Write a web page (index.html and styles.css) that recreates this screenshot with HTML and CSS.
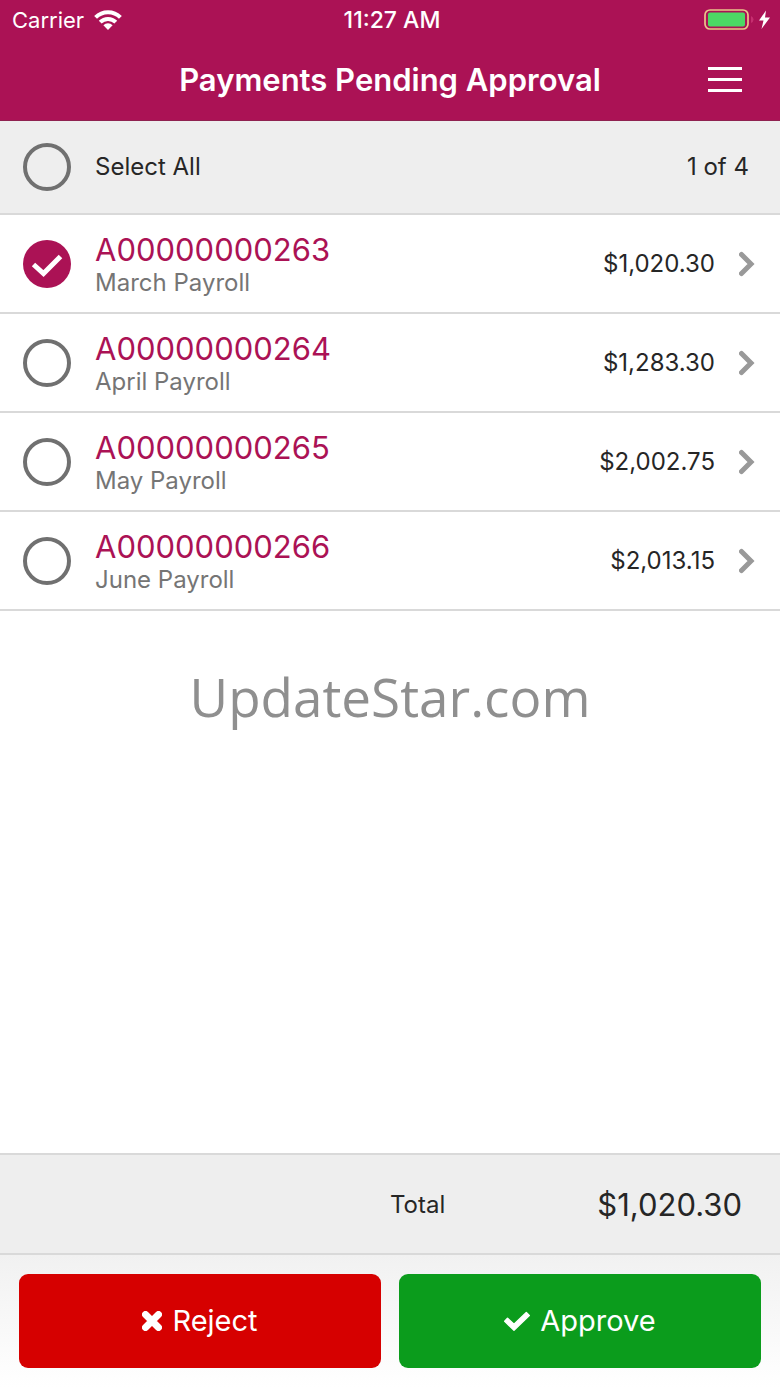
FILE: index.html
```html
<!DOCTYPE html>
<html lang="en">
<head>
<meta charset="utf-8">
<meta name="viewport" content="width=device-width, initial-scale=1">
<title>Payments Pending Approval</title>
<link rel="stylesheet" href="styles.css">
</head>
<body>
<header class="header">
  <div class="status">
    <div class="status-left">
      <span class="carrier">Carrier</span>
      <svg class="wifi" viewBox="0 0 28 20" aria-hidden="true">
        <g fill="none" stroke="currentColor" stroke-width="4">
          <path d="M1.6 7.4 A17.5 17.5 0 0 1 26.4 7.4"/>
          <path d="M6.2 12.2 A11 11 0 0 1 21.8 12.2"/>
        </g>
        <path fill="currentColor" d="M14 20 L9.4 15.2 A6.6 6.6 0 0 1 18.6 15.2 Z"/>
      </svg>
    </div>
    <time class="clock">11:27 AM</time>
    <div class="status-right">
      <svg class="battery" viewBox="0 0 68 22" aria-hidden="true">
        <rect x="1" y="1" width="43" height="19" rx="5" fill="none" stroke="#eac58b" stroke-width="1.700"/>
        <rect x="4" y="3.500" width="37" height="14" rx="2" fill="#4cd964"/>
        <path d="M47 7 Q49.500 8 49.500 10.500 Q49.500 13 47 14 Z" fill="#c62f70"/>
        <path d="M62 1.500 L55 11.500 H59.500 L57.500 20 L66 8.500 H61 Z" fill="#fff"/>
      </svg>
    </div>
  </div>
  <div class="nav">
    <h1 class="title">Payments Pending Approval</h1>
    <button class="menu" type="button" aria-label="Menu">
      <svg class="menu-icon" viewBox="0 0 34 26" aria-hidden="true"><path d="M0 1.500H34M0 12.500H34M0 23.500H34" stroke="currentColor" stroke-width="3"/></svg>
    </button>
  </div>
</header>

<div class="select-bar">
  <input class="check" type="checkbox" id="all">
  <label class="select-label" for="all">Select All</label>
  <span class="count">1 of 4</span>
</div>

<main class="main">
  <ul class="list">
    <li class="row">
      <input class="check" type="checkbox" id="p263" checked>
      <label class="info" for="p263"><span class="ref">A00000000263</span><span class="desc">March Payroll</span></label>
      <span class="amount">$1,020.30</span>
      <a class="details" href="#p263" aria-label="Details of A00000000263"><svg class="chevron" viewBox="0 0 16 26" aria-hidden="true"><path d="M2.500 3.500L12 13L2.500 22.500"/></svg></a>
    </li>
    <li class="row">
      <input class="check" type="checkbox" id="p264">
      <label class="info" for="p264"><span class="ref">A00000000264</span><span class="desc">April Payroll</span></label>
      <span class="amount">$1,283.30</span>
      <a class="details" href="#p264" aria-label="Details of A00000000264"><svg class="chevron" viewBox="0 0 16 26" aria-hidden="true"><path d="M2.500 3.500L12 13L2.500 22.500"/></svg></a>
    </li>
    <li class="row">
      <input class="check" type="checkbox" id="p265">
      <label class="info" for="p265"><span class="ref">A00000000265</span><span class="desc">May Payroll</span></label>
      <span class="amount">$2,002.75</span>
      <a class="details" href="#p265" aria-label="Details of A00000000265"><svg class="chevron" viewBox="0 0 16 26" aria-hidden="true"><path d="M2.500 3.500L12 13L2.500 22.500"/></svg></a>
    </li>
    <li class="row">
      <input class="check" type="checkbox" id="p266">
      <label class="info" for="p266"><span class="ref">A00000000266</span><span class="desc">June Payroll</span></label>
      <span class="amount">$2,013.15</span>
      <a class="details" href="#p266" aria-label="Details of A00000000266"><svg class="chevron" viewBox="0 0 16 26" aria-hidden="true"><path d="M2.500 3.500L12 13L2.500 22.500"/></svg></a>
    </li>
  </ul>
  <p class="watermark">UpdateStar.com</p>
</main>

<section class="total">
  <span class="total-label">Total</span>
  <span class="total-value">$1,020.30</span>
</section>

<footer class="actions">
  <button class="btn reject" type="button">
    <svg class="icon-x" viewBox="0 0 20 20" aria-hidden="true"><path d="M3.500 3.500L16.500 16.500M16.500 3.500L3.500 16.500" stroke="currentColor" stroke-width="7" stroke-linecap="round"/></svg>
    Reject
  </button>
  <button class="btn approve" type="button">
    <svg class="icon-check" viewBox="0 0 26 20" aria-hidden="true"><path d="M3.500 7.200L10 13.300L22.300 1.500L25.300 4.500L10 19.300L0.700 10.300Z" fill="currentColor" stroke="currentColor" stroke-width="1.400" stroke-linejoin="round"/></svg>
    Approve
  </button>
</footer>
</body>
</html>
```
FILE: styles.css
```css
* { box-sizing: border-box; }

body {
  margin: 0;
  min-height: 100vh;
  display: flex;
  flex-direction: column;
  background: #fff;
  color: #262626;
  font-family: Inter, "Liberation Sans", sans-serif;
  font-size: 24px;
  line-height: 32px;
}

.header {
  background: #ab1255;
  color: #fff;
  border-bottom: 1px solid #8f2250;
}

.status {
  display: grid;
  grid-template-columns: 1fr auto 1fr;
  align-items: center;
  height: 40px;
  padding: 0 8px 0 12px;
  font-size: 22px;
}

.status-left { display: flex; align-items: center; gap: 10px; }
.status-right { display: flex; justify-content: flex-end; }
.wifi { width: 28px; height: 20px; }
.clock { font-size: 23px; font-weight: 500; }
.battery { width: 68px; height: 22px; }

.nav {
  display: grid;
  grid-template-columns: 1fr auto 1fr;
  align-items: center;
  height: 80px;
  padding: 0 38px;
}

.title {
  grid-column: 2;
  margin: 0;
  font-size: 31px;
  font-weight: 600;
  line-height: 40px;
}

.menu {
  justify-self: end;
  display: flex;
  padding: 0;
  border: 0;
  background: none;
  color: #fff;
}

.menu-icon { width: 34px; height: 26px; }

.select-bar {
  display: flex;
  align-items: center;
  gap: 24px;
  height: 94px;
  padding: 0 31px 0 23px;
  background: #eee;
  border-bottom: 2px solid #d9d9d9;
}

.select-label { flex: 1; }

.check {
  appearance: none;
  flex: none;
  width: 48px;
  height: 48px;
  margin: 0;
  border: 4px solid #707070;
  border-radius: 50%;
}

.check:checked {
  border: 0;
  background: #ab1255 url("data:image/svg+xml,%3Csvg xmlns='http://www.w3.org/2000/svg' viewBox='0 0 48 48'%3E%3Cpath d='M10.500 24.500L20.500 33.500L37.500 16.500' fill='none' stroke='white' stroke-width='5'/%3E%3C/svg%3E") center / 48px no-repeat;
}

.main { flex: 1; }

.list { margin: 0; padding: 0; list-style: none; }

.row {
  display: flex;
  align-items: center;
  gap: 24px;
  height: 99px;
  padding: 0 25px 0 23px;
  border-bottom: 2px solid #d9d9d9;
}

.info { flex: 1; display: flex; flex-direction: column; padding-top: 4px; }
.ref { color: #ab1255; font-size: 31px; line-height: 34px; }
.desc { color: #757575; line-height: 32px; }
.details { display: flex; }

.chevron {
  width: 16px;
  height: 26px;
  fill: none;
  stroke: #999;
  stroke-width: 5;
  stroke-linecap: round;
}

.watermark {
  margin: 48px 0 0;
  color: #8f8f8f;
  font-family: "Open Sans", "Noto Sans", sans-serif;
  font-size: 53px;
  font-weight: 400;
  line-height: 76px;
  text-align: center;
}

.total {
  display: grid;
  grid-template-columns: 1fr 1fr;
  align-items: center;
  height: 102px;
  padding-top: 2px;
  background: #eee;
  border-top: 2px solid #d9d9d9;
  border-bottom: 2px solid #d9d9d9;
}

.total-label { grid-column: 2; grid-row: 1; }

.total-value {
  grid-column: 2;
  grid-row: 1;
  justify-self: end;
  padding-right: 38px;
  font-size: 31px;
  line-height: 40px;
}

.actions {
  display: grid;
  grid-template-columns: 1fr 1fr;
  gap: 18px;
  padding: 19px;
  background: linear-gradient(#f1f1f1, #fff);
}

.btn {
  display: flex;
  align-items: center;
  justify-content: center;
  gap: 10px;
  height: 94px;
  border: 0;
  border-radius: 9px;
  color: #fff;
  font: inherit;
  font-size: 29px;
}

.reject { background: #d60000; }
.approve { background: #0b9c1c; }
.icon-x { width: 20px; height: 20px; }
.icon-check { width: 26px; height: 20px; }
```
